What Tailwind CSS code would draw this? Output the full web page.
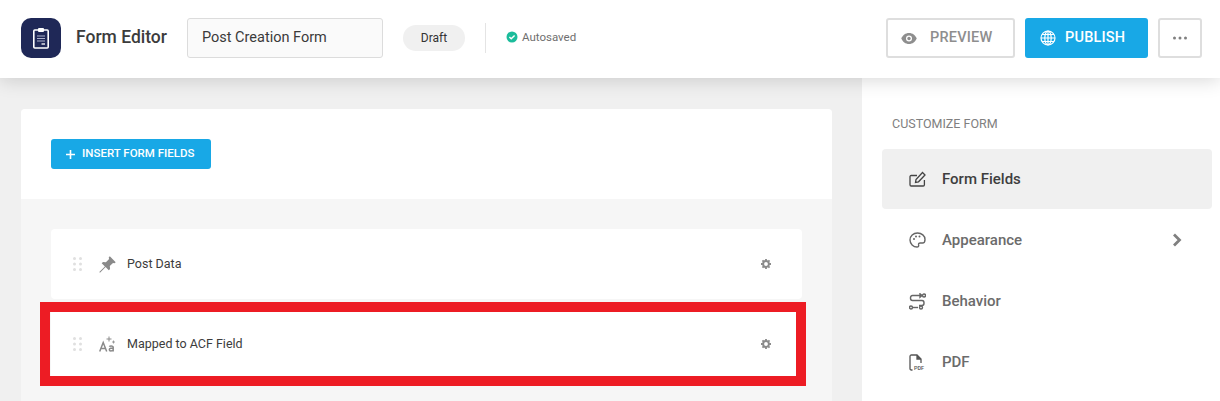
<!doctype html>
<html><head><meta charset="utf-8"><script src="https://cdn.jsdelivr.net/npm/@tailwindcss/browser@4"></script></head>
<body class="m-0 overflow-hidden bg-white font-['Roboto',sans-serif]">
<div class="relative flex h-[401px] w-[1220px] flex-col overflow-hidden">
<header class="relative z-10 flex h-[78px] shrink-0 items-center bg-white pb-[2px] pl-[21px] pr-[18px] shadow-[0_2px_18px_rgba(0,0,0,0.16)]">
  <div class="flex h-10 w-10 items-center justify-center rounded-[10px] bg-[#1f2857]">
    <svg width="18" height="22" viewBox="0 0 18 22" fill="none"><rect x="1.800" y="3" width="14.400" height="18" rx="1" stroke="#fff" stroke-width="1.600"/><rect x="6" y="1" width="6" height="4" rx="1" fill="#fff"/><path d="M5 9h8M5 11.500h8M5 14h8" stroke="#aeb2cc" stroke-width="1.200"/><path d="M9.500 17h3.500" stroke="#fff" stroke-width="1.300"/></svg>
  </div>
  <div class="ml-[15px] text-[17.5px] font-medium leading-none text-[#3c3c3c]">Form Editor</div>
  <div class="ml-[20px] flex h-10 w-[196px] items-center rounded-[3px] border border-[#dcdcdc] bg-[#fafafa] pl-[14px] text-[14.5px] text-[#3a3a3a]">Post Creation Form</div>
  <div class="ml-[20px] flex h-[26px] w-[62px] items-center justify-center rounded-full bg-[#f0f0f0] text-[12px] text-[#333]">Draft</div>
  <div class="ml-[20px] h-[30px] w-px bg-[#e4e4e4]"></div>
  <svg class="ml-[20px] -translate-y-px" width="12" height="12" viewBox="0 0 12 12"><circle cx="6" cy="6" r="5.500" fill="#1bbc9b"/><path d="M3.400 6.100 5.200 7.800 8.600 4.400" stroke="#fff" stroke-width="1.400" fill="none"/></svg>
  <div class="ml-[4px] text-[11.5px] text-[#6f6f6f]">Autosaved</div>
  <div class="ml-auto flex items-center gap-[10px]">
    <div class="flex h-10 w-[129px] items-center rounded-[3px] border-2 border-[#dedede] pl-[13px] text-[14.5px] font-medium tracking-[0.2px] text-[#8e8e8e]">
      <svg width="16" height="11" viewBox="0 0 16 11"><path d="M8 0C4.500 0 1.600 2.200 0.400 5.500 1.600 8.800 4.500 11 8 11s6.400-2.200 7.600-5.500C14.400 2.200 11.500 0 8 0Z" fill="#8e8e8e"/><circle cx="8" cy="5.500" r="3" fill="#fff"/><circle cx="8" cy="5.500" r="1.700" fill="#8e8e8e"/></svg>
      <span class="ml-[13px]">PREVIEW</span>
    </div>
    <div class="flex h-10 w-[123px] items-center rounded-[3px] bg-[#18a8e6] pl-[15px] text-[14.5px] font-medium tracking-[0.2px] text-white">
      <svg width="16" height="16" viewBox="0 0 16 16" fill="none" stroke="#fff" stroke-width="1.200"><circle cx="8" cy="8" r="7"/><ellipse cx="8" cy="8" rx="3.200" ry="7"/><path d="M1 8h14M2 4.500h12M2 11.500h12M8 1v14"/></svg>
      <span class="ml-[9px]">PUBLISH</span>
    </div>
    <div class="flex h-10 w-[44px] items-center justify-center rounded-[3px] border-2 border-[#dedede]">
      <svg width="16" height="4" viewBox="0 0 16 4" fill="#808080"><circle cx="2.500" cy="2" r="1.500"/><circle cx="8" cy="2" r="1.500"/><circle cx="13.500" cy="2" r="1.500"/></svg>
    </div>
  </div>
</header>
<div class="flex min-h-0 flex-1">
  <main class="w-[862px] shrink-0 bg-[#f0f0f0] pl-[21px] pt-[31px]">
    <div class="h-[400px] w-[811px] rounded-[4px] bg-[#f6f6f6]">
      <div class="flex h-[90px] items-start rounded-t-[4px] bg-white pl-[30px] pt-[30px]">
        <div class="flex h-[30px] w-[160px] items-center rounded-[3px] bg-[#18a8e6] pl-[15px] text-[11.5px] font-medium text-white">
          <svg width="9" height="9" viewBox="0 0 9 9"><path d="M4.500 0v9M0 4.500h9" stroke="#fff" stroke-width="1.600"/></svg>
          <span class="ml-[7px]">INSERT FORM FIELDS</span>
        </div>
      </div>
      <div class="flex flex-col gap-[10px] pl-[30px] pt-[30px]">
        <div class="flex h-[70px] w-[751px] items-center rounded-[4px] bg-white pl-[22px] pr-[31px]">
          <svg width="9" height="14" viewBox="0 0 9 14" fill="#e0e0e0"><circle cx="1.500" cy="1.500" r="1.500"/><circle cx="7.500" cy="1.500" r="1.500"/><circle cx="1.500" cy="7" r="1.500"/><circle cx="7.500" cy="7" r="1.500"/><circle cx="1.500" cy="12.500" r="1.500"/><circle cx="7.500" cy="12.500" r="1.500"/></svg>
          <svg class="ml-[17px]" width="17" height="17" viewBox="0 0 17 17" fill="#8a8a8a"><path d="M10.800 0.300 16.700 6.200 15.600 7.300 14 6.900 10.800 10.100 11.100 13 9.800 14.300 6.600 11.100 1 16.700 0.300 16 5.900 10.400 2.700 7.200 4 5.900 6.900 6.200 10.100 3 9.700 1.400Z"/></svg>
          <span class="ml-[11px] text-[12.5px] text-[#3c3c3c]">Post Data</span>
          <svg class="ml-auto" width="10" height="10" viewBox="0 0 11 11"><circle cx="5.500" cy="5.500" r="3.200" fill="none" stroke="#8a8a8a" stroke-width="2.200"/><path d="M5.500 0v2M5.500 9v2M0 5.500h2M9 5.500h2M1.600 1.600 3 3M8 8l1.400 1.400M9.400 1.600 8 3M3 8 1.600 9.400" stroke="#8a8a8a" stroke-width="2"/></svg>
        </div>
        <div class="flex h-[70px] w-[751px] items-center rounded-[4px] bg-white pl-[22px] pr-[31px]">
          <svg width="9" height="14" viewBox="0 0 9 14" fill="#e0e0e0"><circle cx="1.500" cy="1.500" r="1.500"/><circle cx="7.500" cy="1.500" r="1.500"/><circle cx="1.500" cy="7" r="1.500"/><circle cx="7.500" cy="7" r="1.500"/><circle cx="1.500" cy="12.500" r="1.500"/><circle cx="7.500" cy="12.500" r="1.500"/></svg>
          <svg class="ml-[17px]" width="17" height="16" viewBox="0 0 17 16" fill="none" stroke="#8a8a8a" stroke-width="1.500"><path d="M.7 15.500 4.200 6.500 7.700 15.500M2 12.500h4.500"/><path d="M10.300 10.600c.6-.9 3.400-1.100 3.900.3v4.600M14.200 12.300c-1.600-.4-3.900-.1-3.900 1.500s2.900 1.600 3.900.1"/><path d="M10 .5v5M7.500 3h5" stroke-width="1"/><path d="M14.500 4.500v3M13 6h3" stroke-width=".8"/></svg>
          <span class="ml-[11px] text-[12.5px] text-[#3c3c3c]">Mapped to ACF Field</span>
          <svg class="ml-auto" width="10" height="10" viewBox="0 0 11 11"><circle cx="5.500" cy="5.500" r="3.200" fill="none" stroke="#8a8a8a" stroke-width="2.200"/><path d="M5.500 0v2M5.500 9v2M0 5.500h2M9 5.500h2M1.600 1.600 3 3M8 8l1.400 1.400M9.400 1.600 8 3M3 8 1.600 9.400" stroke="#8a8a8a" stroke-width="2"/></svg>
        </div>
      </div>
    </div>
  </main>
  <aside class="flex-1 bg-white pl-[20px] pr-[8px] pt-[39px]">
    <div class="pl-[10px] text-[12.5px] leading-[14px] text-[#808080]">CUSTOMIZE FORM</div>
    <nav class="mt-[18px] flex flex-col gap-px text-[15px] font-medium text-[#6b6b6b]">
      <div class="flex h-[60px] items-center rounded-[4px] bg-[#f0f0f0] pl-[27px] text-[#3e3e3e]">
        <svg width="18" height="17" viewBox="0 0 18 17" fill="none" stroke="#444" stroke-width="1.300"><path d="M8 4.500H2.200C1.500 4.500 1 5 1 5.700v8.100c0 .7.5 1.200 1.200 1.200h12c.7 0 1.200-.5 1.200-1.200V9"/><path d="M6.500 11.500 7 8.500 13.500 1.500 16 4 9.500 10.800Z"/></svg>
        <span class="ml-[15px]">Form Fields</span>
      </div>
      <div class="flex h-[60px] items-center pl-[27px] pr-[30px]">
        <svg width="17" height="16" viewBox="0 0 17 16" fill="none" stroke="#666" stroke-width="1.400"><path d="M8.500 1C4.300 1 1 4.200 1 8s3.300 7 7 7c1.500 0 1.900-1 1.600-2-.3-1.200.3-2 1.600-2h2.300C15 11 16 9.500 16 7.500 16 3.800 12.700 1 8.500 1Z"/><circle cx="5" cy="7" r="1" fill="#666" stroke="none"/><circle cx="7" cy="4.500" r="1" fill="#666" stroke="none"/><circle cx="10.500" cy="4.500" r="1" fill="#666" stroke="none"/></svg>
        <span class="ml-[16px]">Appearance</span>
        <svg class="ml-auto" width="10" height="14" viewBox="0 0 10 14" fill="none" stroke="#808080" stroke-width="2.800"><path d="M2 1.500 7.500 7 2 12.500"/></svg>
      </div>
      <div class="flex h-[60px] items-center pl-[27px]">
        <svg width="17" height="17" viewBox="0 0 17 17" fill="none" stroke="#666" stroke-width="1.400"><path d="M12 2.500H3.500C.8 2.500.8 7.500 3.500 7.500h9.500c2.700 0 2.700 5 0 5H10"/><circle cx="15" cy="2.500" r="1.500"/><path d="M11 .8v3.400l2-1.700Z" fill="#666"/><circle cx="2" cy="14.500" r="1.500"/><circle cx="12" cy="14.500" r="1.500"/><path d="M4 14.500h5"/></svg>
        <span class="ml-[16px]">Behavior</span>
      </div>
      <div class="flex h-[60px] items-center pl-[27px]">
        <svg width="17" height="17" viewBox="0 0 17 17" fill="none" stroke="#555" stroke-width="1.300"><path d="M3.500 16H2.500C1.500 16 1 15.500 1 14.500V2.500C1 1.500 1.500 1 2.500 1H8l4 4v4"/><path d="M8 1v4h4" fill="#555"/><text x="5" y="16" font-size="5.500" font-family="'Roboto',sans-serif" font-weight="500" fill="#555" stroke="none">PDF</text></svg>
        <span class="ml-[16px]">PDF</span>
      </div>
    </nav>
  </aside>
</div>
<div class="pointer-events-none absolute left-[40px] top-[302px] z-20 h-[84px] w-[766px] border-[10px] border-[#ed1c24]"></div>
</div>
</body></html>
